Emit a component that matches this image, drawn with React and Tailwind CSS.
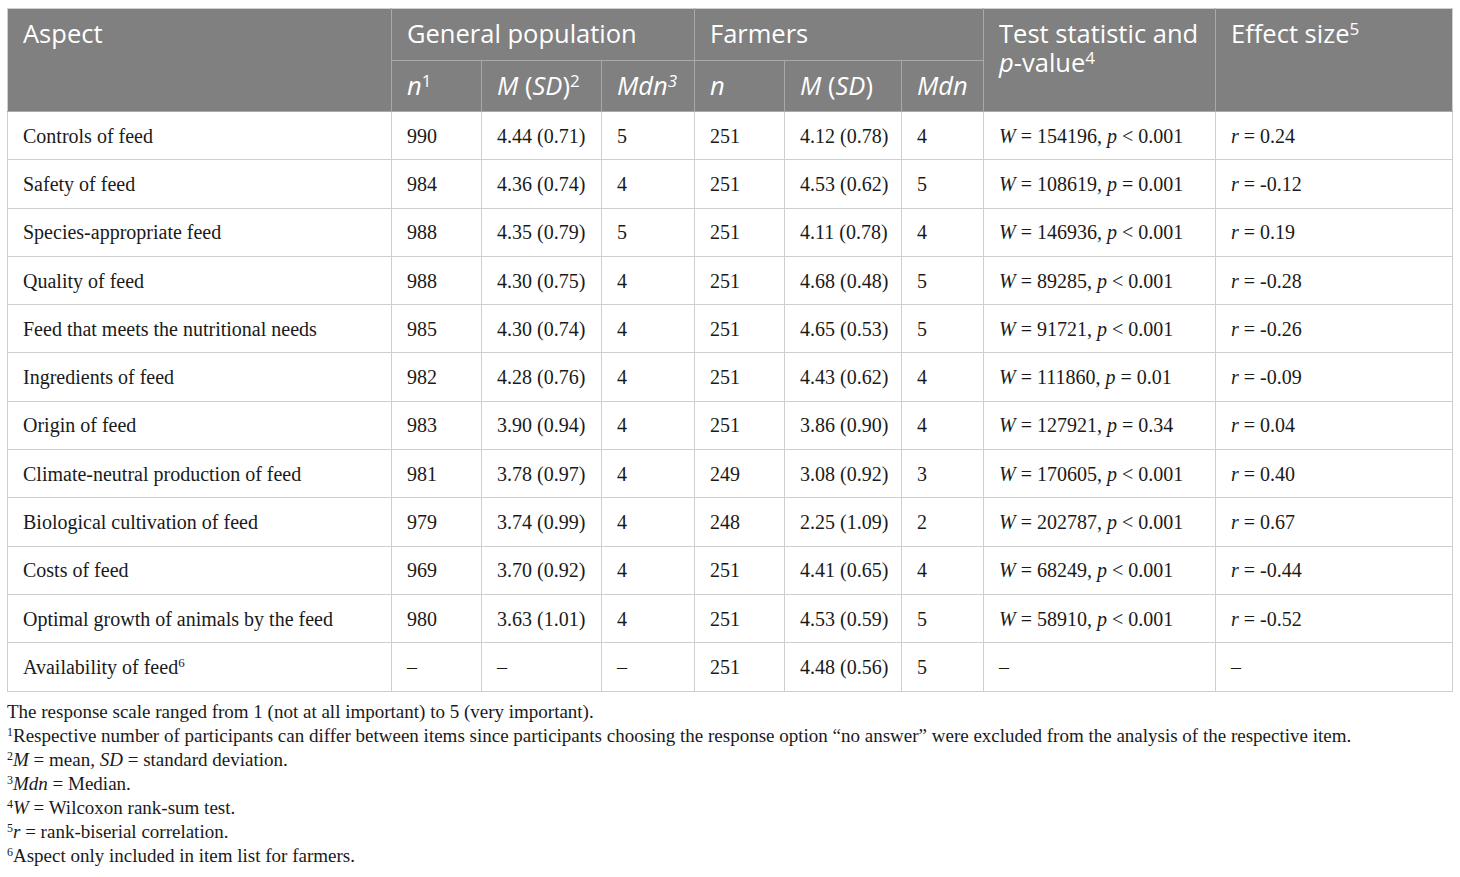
import React from "react";

const rows = [
  ["Controls of feed", "990", "4.44 (0.71)", "5", "251", "4.12 (0.78)", "4", ["154196", "<", "0.001"], "0.24"],
  ["Safety of feed", "984", "4.36 (0.74)", "4", "251", "4.53 (0.62)", "5", ["108619", "=", "0.001"], "-0.12"],
  ["Species-appropriate feed", "988", "4.35 (0.79)", "5", "251", "4.11 (0.78)", "4", ["146936", "<", "0.001"], "0.19"],
  ["Quality of feed", "988", "4.30 (0.75)", "4", "251", "4.68 (0.48)", "5", ["89285", "<", "0.001"], "-0.28"],
  ["Feed that meets the nutritional needs", "985", "4.30 (0.74)", "4", "251", "4.65 (0.53)", "5", ["91721", "<", "0.001"], "-0.26"],
  ["Ingredients of feed", "982", "4.28 (0.76)", "4", "251", "4.43 (0.62)", "4", ["111860", "=", "0.01"], "-0.09"],
  ["Origin of feed", "983", "3.90 (0.94)", "4", "251", "3.86 (0.90)", "4", ["127921", "=", "0.34"], "0.04"],
  ["Climate-neutral production of feed", "981", "3.78 (0.97)", "4", "249", "3.08 (0.92)", "3", ["170605", "<", "0.001"], "0.40"],
  ["Biological cultivation of feed", "979", "3.74 (0.99)", "4", "248", "2.25 (1.09)", "2", ["202787", "<", "0.001"], "0.67"],
  ["Costs of feed", "969", "3.70 (0.92)", "4", "251", "4.41 (0.65)", "4", ["68249", "<", "0.001"], "-0.44"],
  ["Optimal growth of animals by the feed", "980", "3.63 (1.01)", "4", "251", "4.53 (0.59)", "5", ["58910", "<", "0.001"], "-0.52"],
];

const th = "border border-[#a9a9a9] px-[15px] text-left align-top font-normal pt-[10px]";
const td = "border border-[#cfcfcf] pl-[15px] pr-[4px] text-left align-middle whitespace-nowrap overflow-hidden";
const hs = "text-[17px]";

export default function App() {
  return (
    <div className="bg-white w-[1460px] h-[877px] pt-[8px] pl-[7px] text-[#1a1a1a]" style={{ fontFamily: '"Liberation Serif", serif' }}>
      <table className="border-collapse table-fixed w-[1445px]">
        <colgroup>
          <col className="w-[384px]" />
          <col className="w-[90px]" />
          <col className="w-[120px]" />
          <col className="w-[93px]" />
          <col className="w-[90px]" />
          <col className="w-[117px]" />
          <col className="w-[82px]" />
          <col className="w-[232px]" />
          <col className="w-[237px]" />
        </colgroup>
        <thead className="bg-[#808080] text-white text-[25.5px] leading-[29px]" style={{ fontFamily: '"Open Sans", sans-serif' }}>
          <tr className="h-[52px]">
            <th rowSpan={2} className={th + " border-t-[#cfcfcf] border-l-[#cfcfcf]"}>Aspect</th>
            <th colSpan={3} className={th + " border-t-[#cfcfcf]"}>General population</th>
            <th colSpan={3} className={th + " border-t-[#cfcfcf]"}>Farmers</th>
            <th rowSpan={2} className={th + " border-t-[#cfcfcf]"}>
              Test statistic and <i>p</i>-value<sup className={hs}>4</sup>
            </th>
            <th rowSpan={2} className={th + " border-t-[#cfcfcf] border-r-[#cfcfcf]"}>
              Effect size<sup className={hs}>5</sup>
            </th>
          </tr>
          <tr className="h-[51px]">
            <th className={th}><i>n</i><sup className={hs}>1</sup></th>
            <th className={th}><i>M</i> (<i>SD</i>)<sup className={hs}>2</sup></th>
            <th className={th}><i>Mdn</i><sup className={hs}><i>3</i></sup></th>
            <th className={th}><i>n</i></th>
            <th className={th}><i>M</i> (<i>SD</i>)</th>
            <th className={th}><i>Mdn</i></th>
          </tr>
        </thead>
        <tbody className="text-[20px] leading-[24px]">
          {rows.map((r, i) => (
            <tr key={i} className="h-[48.3px]">
              <td className={td}>{r[0]}</td>
              <td className={td}>{r[1]}</td>
              <td className={td}>{r[2]}</td>
              <td className={td}>{r[3]}</td>
              <td className={td}>{r[4]}</td>
              <td className={td}>{r[5]}</td>
              <td className={td}>{r[6]}</td>
              <td className={td}>
                <i>W</i> = {r[7][0]}, <i>p</i> {r[7][1]} {r[7][2]}
              </td>
              <td className={td}>
                <i>r</i> = {r[8]}
              </td>
            </tr>
          ))}
          <tr className="h-[48.3px]">
            <td className={td}>Availability of feed<sup className="text-[13px]">6</sup></td>
            <td className={td}>–</td>
            <td className={td}>–</td>
            <td className={td}>–</td>
            <td className={td}>251</td>
            <td className={td}>4.48 (0.56)</td>
            <td className={td}>5</td>
            <td className={td}>–</td>
            <td className={td}>–</td>
          </tr>
        </tbody>
      </table>
      <div className="pt-[8px] text-[19px] leading-[24px]">
        <p>The response scale ranged from 1 (not at all important) to 5 (very important).</p>
        <p><sup className="text-[12px]">1</sup>Respective number of participants can differ between items since participants choosing the response option “no answer” were excluded from the analysis of the respective item.</p>
        <p><sup className="text-[12px]">2</sup><i>M</i> = mean, <i>SD</i> = standard deviation.</p>
        <p><sup className="text-[12px]">3</sup><i>Mdn</i> = Median.</p>
        <p><sup className="text-[12px]">4</sup><i>W</i> = Wilcoxon rank-sum test.</p>
        <p><sup className="text-[12px]">5</sup><i>r</i> = rank-biserial correlation.</p>
        <p><sup className="text-[12px]">6</sup>Aspect only included in item list for farmers.</p>
      </div>
    </div>
  );
}
